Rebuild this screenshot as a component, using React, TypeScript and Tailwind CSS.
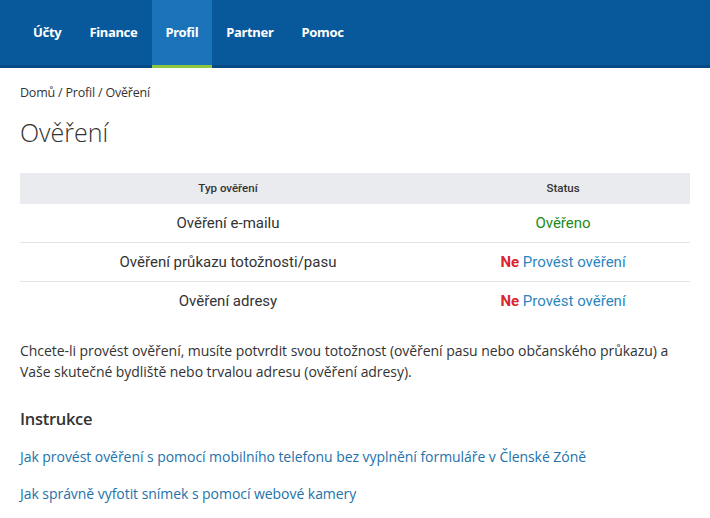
const navItems = ["Účty", "Finance", "Profil", "Partner", "Pomoc"]

const rows = [
  { name: "Ověření e-mailu", ok: true },
  { name: "Ověření průkazu totožnosti/pasu", ok: false },
  { name: "Ověření adresy", ok: false },
]

const App = () => {
  return (
    <div className="min-h-screen bg-white font-['Open_Sans',sans-serif] text-[#333]">
      <header className="h-[68px] bg-[#08589c] flex pl-[19px] border-b-[3px] border-[#064a85]">
        {navItems.map((item) => (
          <a
            key={item}
            className={
              item === "Profil"
                ? "flex items-center px-[14px] h-[68px] bg-[#1a72b9] border-b-[3px] border-[#8dc63f] text-white text-[13px] font-bold tracking-[-0.3px] font-['Noto_Sans',sans-serif]"
                : "flex items-center px-[14px] h-[65px] text-white text-[13px] font-bold tracking-[-0.3px] font-['Noto_Sans',sans-serif]"
            }
          >
            {item}
          </a>
        ))}
      </header>

      <main className="px-5">
        <div className="pt-[16px] text-[12.5px] tracking-[-0.2px] text-[#333]">Domů / Profil / Ověření</div>
        <h1 className="mt-[12px] text-[25px] font-light leading-[34px] text-[#333]">Ověření</h1>

        <table className="mt-[24px] w-full font-['Roboto',sans-serif] border-collapse">
          <thead>
            <tr className="bg-[#e9ebee] h-[31px]">
              <th className="w-[416px] text-[11.5px] font-medium text-[#333]">Typ ověření</th>
              <th className="text-[11.5px] font-medium text-[#333]">Status</th>
            </tr>
          </thead>
          <tbody>
            {rows.map((r, i) => (
              <tr key={r.name} className={i > 0 ? "h-[39px] border-t border-[#e4e4e4]" : "h-[39px]"}>
                <td className="text-center text-[15px] text-[#333]">{r.name}</td>
                <td className="text-center text-[15px]">
                  {r.ok ? (
                    <span className="text-[#218a21]">Ověřeno</span>
                  ) : (
                    <>
                      <span className="text-[#d9262f] font-bold">Ne</span>{" "}
                      <a className="text-[#2d86c0]">Provést ověření</a>
                    </>
                  )}
                </td>
              </tr>
            ))}
          </tbody>
        </table>

        <p className="mt-[19px] text-[14px] leading-[21px] tracking-[-0.05px] text-[#333]">
          Chcete-li provést ověření, musíte potvrdit svou totožnost (ověření pasu nebo občanského průkazu) a
          <br />
          Vaše skutečné bydliště nebo trvalou adresu (ověření adresy).
        </p>

        <h2 className="mt-[25px] text-[16.5px] font-semibold tracking-[-0.3px] text-[#333]">Instrukce</h2>

        <div className="mt-[14px] flex flex-col gap-[16px] text-[14px] tracking-[-0.05px] text-[#2372aa]">
          <a>Jak provést ověření s pomocí mobilního telefonu bez vyplnění formuláře v Členské Zóně</a>
          <a>Jak správně vyfotit snímek s pomocí webové kamery</a>
        </div>
      </main>
    </div>
  )
}

export default App
